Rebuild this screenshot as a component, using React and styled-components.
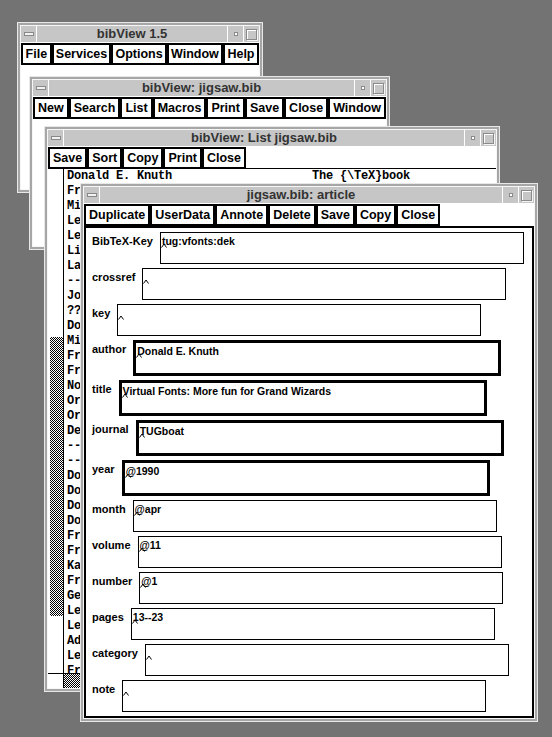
import styled, { createGlobalStyle } from 'styled-components';

const GlobalStyle = createGlobalStyle`
    html, body {
        margin: 0;
        padding: 0;
        background: #737373;
    }
    body {
        font-family: "Liberation Sans", Arial, sans-serif;
    }
`;

const CHECKER = `repeating-conic-gradient(#000 0 25%, #fff 0 50%) 0 0 / 2px 2px`;

const listLines = [
    "Donald E. Knuth" + " ".repeat(20) + "The {\\TeX}book",
    "Frank Mittelbach",
    "Michael Doob",
    "Leslie Lamport",
    "Leslie Lamport",
    "Lincoln K. Durst",
    "Laurent Siebenmann",
    "-----",
    "John Hobby",
    "???",
    "Donald E. Knuth",
    "Michael Spivak",
    "Frank Mittelbach",
    "Frank Mittelbach",
    "Norbert Schwarz",
    "Oren Patashnik",
    "Oren Patashnik",
    "Dean Guenther",
    "-----",
    "-----",
    "Donald E. Knuth",
    "Donald E. Knuth",
    "Donald E. Knuth",
    "Donald E. Knuth",
    "Frank Mittelbach",
    "Frank Mittelbach",
    "Karl Berry",
    "Frank Mittelbach",
    "George Gratzer",
    "Leslie Lamport",
    "Leslie Lamport",
    "Adobe Systems",
    "Leslie Lamport",
    "Frank Mittelbach",
];

const fields = [
    { name: "BibTeX-Key", value: "tug:vfonts:dek" },
    { name: "crossref", value: "" },
    { name: "key", value: "" },
    { name: "author", value: "Donald E. Knuth", bold: true },
    { name: "title", value: "Virtual Fonts: More fun for Grand Wizards", bold: true },
    { name: "journal", value: "TUGboat", bold: true },
    { name: "year", value: "@1990", bold: true },
    { name: "month", value: "@apr" },
    { name: "volume", value: "@11" },
    { name: "number", value: "@1" },
    { name: "pages", value: "13--23" },
    { name: "category", value: "" },
    { name: "note", value: "" },
];

function Window({ x, y, w, h, title, menu, children }) {
    return (
        <Frame $x={x} $y={y} $w={w} $h={h}>
            <Inner>
                <TitleBar>
                    <TitleButton $left><MinGlyph /></TitleButton>
                    <Title>{title}</Title>
                    <TitleButton><DotGlyph /></TitleButton>
                    <TitleButton><MaxGlyph /></TitleButton>
                </TitleBar>
                <MenuBar>
                    {menu.map(item => <MenuButton key={item}>{item}</MenuButton>)}
                </MenuBar>
                {children}
            </Inner>
        </Frame>
    );
}

export default function App() {
    return (
        <>
            <GlobalStyle />
            <Desktop>
                <Window x={17} y={22} w={246} h={171} title="bibView 1.5"
                    menu={["File", "Services", "Options", "Window", "Help"]} />

                <Window x={29} y={76} w={361} h={174} title="bibView: jigsaw.bib"
                    menu={["New", "Search", "List", "Macros", "Print", "Save", "Close", "Window"]} />

                <Window x={44} y={126} w={456} h={566} title="bibView: List jigsaw.bib"
                    menu={["Save", "Sort", "Copy", "Print", "Close"]}>
                    <ListArea>
                        <ListMain>
                            <VTrough>
                                <Thumb $top={168} $len={279} />
                            </VTrough>
                            <ListView>
                                {listLines.map((line, i) => <ListLine key={i}>{line}</ListLine>)}
                            </ListView>
                        </ListMain>
                        <HScroll>
                            <Corner />
                            <HTrough>
                                <HThumb />
                            </HTrough>
                        </HScroll>
                    </ListArea>
                </Window>

                <Window x={80} y={183} w={458} h={539} title="jigsaw.bib: article"
                    menu={["Duplicate", "UserData", "Annote", "Delete", "Save", "Copy", "Close"]}>
                    <Form>
                        {fields.map(f => (
                            <Row key={f.name}>
                                <Label>{f.name}</Label>
                                <Field $hl={f.bold}>
                                    {f.value}
                                    <Caret width="6" height="5" viewBox="0 0 6 5">
                                        <polyline points="0.5,4.5 3,1 5.5,4.5" fill="none" stroke="#000" strokeWidth="1" />
                                    </Caret>
                                </Field>
                            </Row>
                        ))}
                    </Form>
                </Window>
            </Desktop>
        </>
    );
}

const Desktop = styled.div`
    position: relative;
    width: 552px;
    height: 737px;
    overflow: hidden;
    background: #737373;
`;

const Frame = styled.div`
    position: absolute;
    left: ${p => p.$x}px;
    top: ${p => p.$y}px;
    width: ${p => p.$w}px;
    height: ${p => p.$h}px;
    box-sizing: border-box;
    border: 1px solid #e8e8e8;
    padding: 2px;
    background: #a6a6a6;
    display: flex;
`;

const Inner = styled.div`
    flex: 1;
    min-width: 0;
    min-height: 0;
    display: flex;
    flex-direction: column;
    border: 1px solid #f6f6f6;
    background: #fff;
    overflow: hidden;
`;

const TitleBar = styled.div`
    display: flex;
    height: 16px;
    margin-bottom: 1px;
    flex-shrink: 0;
    background: #c6c6c6;
`;

const TitleButton = styled.div`
    width: 16px;
    box-sizing: border-box;
    display: flex;
    align-items: center;
    justify-content: center;
    border-left: ${p => p.$left ? "none" : "1px solid #fff"};
    border-right: ${p => p.$left ? "1px solid #fff" : "none"};
`;

const MinGlyph = styled.div`
    width: 8px;
    height: 2px;
    background: #f2f2f2;
    border: 1px solid #888;
`;

const DotGlyph = styled.div`
    width: 2px;
    height: 2px;
    background: #fff;
    border: 1px solid #8a8a8a;
`;

const MaxGlyph = styled.div`
    width: 9px;
    height: 9px;
    border: 1px solid #8a8a8a;
    box-shadow: inset 1px 1px 0 #fff, 1px 1px 0 #f4f4f4;
`;

const Title = styled.div`
    flex: 1;
    text-align: center;
    font: bold 13px/16px "Liberation Sans", Arial, sans-serif;
    color: #333;
    white-space: nowrap;
    overflow: hidden;
`;

const MenuBar = styled.div`
    display: flex;
    flex-shrink: 0;
    height: 22px;
    min-width: 0;
`;

const MenuButton = styled.div`
    box-sizing: border-box;
    height: 22px;
    min-width: 0;
    flex: 0 1 auto;
    display: flex;
    align-items: center;
    justify-content: center;
    border: 2px solid #000;
    padding: 0 3px;
    font: bold 12.5px/18px "Liberation Sans", Arial, sans-serif;
    color: #000;
    white-space: nowrap;
`;

const ListArea = styled.div`
    flex: 1;
    min-height: 0;
    display: flex;
    flex-direction: column;
    border-top: 1px solid #000;
    margin-top: -1px;
`;

const ListMain = styled.div`
    flex: 1;
    min-height: 0;
    display: flex;
`;

const VTrough = styled.div`
    width: 13px;
    margin-left: 2px;
    display: flex;
    flex-direction: column;
`;

const Thumb = styled.div`
    margin-top: ${p => p.$top}px;
    height: ${p => p.$len}px;
    background: ${CHECKER};
`;

const ListView = styled.div`
    flex: 1;
    min-width: 0;
    border-left: 1px solid #000;
    padding-left: 3px;
    overflow: hidden;
`;

const ListLine = styled.div`
    height: 15px;
    font: bold 12px/15px "Liberation Mono", "Courier New", monospace;
    letter-spacing: -0.2px;
    white-space: pre;
    color: #000;
`;

const HScroll = styled.div`
    display: flex;
    height: 14px;
    flex-shrink: 0;
    border-top: 1px solid #000;
`;

const Corner = styled.div`
    width: 15px;
`;

const HTrough = styled.div`
    flex: 1;
    border-left: 1px solid #000;
    display: flex;
`;

const HThumb = styled.div`
    width: 220px;
    background: ${CHECKER};
`;

const Form = styled.div`
    flex: 1;
    min-height: 0;
    border: 2px solid #000;
    padding: 4px 0 0 6px;
    display: flex;
    flex-direction: column;
    gap: 4px;
`;

const Row = styled.div`
    display: flex;
    align-items: flex-start;
    gap: 7px;
`;

const Label = styled.div`
    font: bold 11px/12px "Liberation Sans", Arial, sans-serif;
    padding-top: 3px;
    color: #000;
    white-space: nowrap;
`;

const Field = styled.div`
    position: relative;
    box-sizing: border-box;
    flex-shrink: 0;
    width: ${p => p.$hl ? 368 : 364}px;
    height: ${p => p.$hl ? 36 : 32}px;
    border: ${p => p.$hl ? 3 : 1}px solid #000;
    padding: 2px 1px;
    font: bold 10.5px/12px "Liberation Sans", Arial, sans-serif;
    color: #000;
    white-space: nowrap;
    overflow: hidden;
`;

const Caret = styled.svg`
    position: absolute;
    left: 0;
    top: 10px;
`;
